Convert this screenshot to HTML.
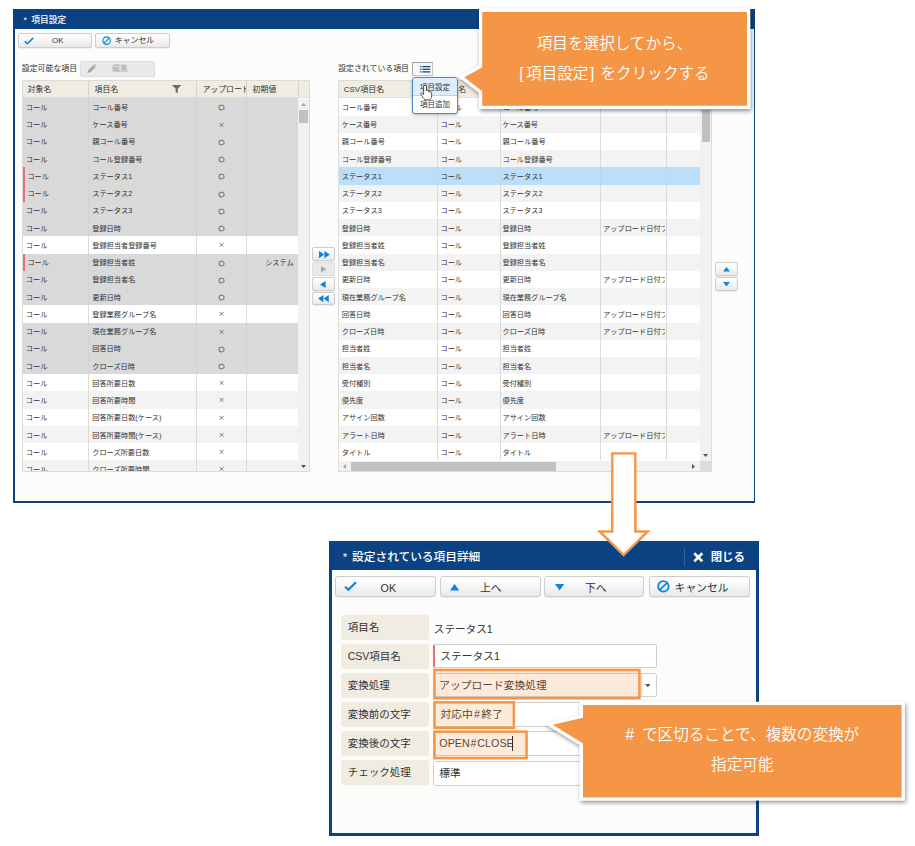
<!DOCTYPE html>
<html lang="ja">
<head>
<meta charset="utf-8">
<title>項目設定</title>
<style>
html,body{margin:0;padding:0;background:#fff;}
body{width:915px;height:846px;position:relative;overflow:hidden;
  font-family:"Liberation Sans","Noto Sans CJK JP",sans-serif;color:#333;
}
.abs,.abs *{position:absolute;}
div,span,i,b{position:absolute;box-sizing:border-box;white-space:nowrap;}
svg{position:absolute;overflow:visible;}
/* ---------- window 1 ---------- */
#w1{left:13px;top:9px;width:742px;height:494px;background:#0a4282;}
#w1 .body{left:2px;top:20px;width:738.6px;height:472px;background:#fcfcfa;}
#w1 .ttl{left:10.4px;top:5px;font-size:8.75px;word-spacing:2px;line-height:13px;font-weight:500;color:#fff;}
.btn{border:1px solid #cdcdcd;border-radius:2px;background:linear-gradient(#ffffff,#f4f4f4 55%,#e9e9e9);box-shadow:0 0.5px 0.5px rgba(0,0,0,.12);}
.btn.dis{background:#e9e9e9;border-color:#dcdcdc;box-shadow:none;}
.t8{font-size:7.9px;line-height:12px;}
/* tables */
.tbl{background:#fff;border:1px solid #dcdcdc;overflow:hidden;}
.hd{left:0;top:0;height:17.4px;background:#f0ece1;border-bottom:1px solid #e4e0d4;}
.hd span{top:3px;font-size:7.9px;line-height:12px;color:#333;}
.hd i{top:0;width:1px;height:17.4px;background:#fbfaf6;border-left:0.6px solid #d6d2c6;}
.rows{left:0;top:17.4px;}
.r{left:0;height:17.24px;font-size:7.2px;line-height:17.6px;color:#333;}
.r span{top:0.6px;}
#lt .r .c3{top:1px;}
#lt .r .c3.x{top:0px;}
.r.e{background:#fff;}
.r.o{background:#f3f3f3;}
.r.g{background:#d9d9d9;}
.r.s{background:#bbdefb;}
#lt .r{width:275.2px;}
#lt .c1{left:3.2px;}
#lt .c2{left:69.6px;}
#lt .c3{left:174px;width:49.7px;text-align:center;color:#444;font-size:6.5px;font-family:"IPAGothic","Noto Sans CJK JP",sans-serif;-webkit-text-stroke:0.18px #3a3a3a;color:#3a3a3a;}
#lt .c3.x{font-family:"Noto Sans CJK JP",sans-serif;font-size:6.6px;-webkit-text-stroke:0;color:#484848;}
#lt .c4{left:224.6px;width:46.5px;text-align:right;}
#lt .red{left:0;top:0;width:2px;height:17.24px;background:#e8707a;}
.vl{top:0;width:1px;background:#d0d0d0;opacity:.75;}
#rt .r{width:361px;}
#rt .d1{left:2.8px;}
#rt .d2{left:101.6px;}
#rt .d3{left:163.6px;}
#rt .d4{left:264.2px;width:61.6px;overflow:hidden;height:17px;}
/* ---------- window 2 ---------- */
#w2{left:329.1px;top:541.2px;width:429.9px;height:294.8px;background:#0a4282;}
#w2 .body{left:2.6px;top:28.9px;width:424.5px;height:263px;background:#fcfcfa;}
#w2 .ttl{left:13.6px;top:7.7px;font-size:11.7px;word-spacing:1.6px;line-height:16px;font-weight:500;color:#fff;}
.t10{font-size:10.8px;line-height:16px;}
.lab{left:341.1px;width:88.2px;height:24.8px;background:#f0ece1;border-radius:3px;font-size:10.5px;line-height:24.8px;padding-left:6.6px;color:#333;}
.inp{left:433.3px;height:24.6px;border:1px solid #cfcfcf;border-radius:2.5px;background:#fff;font-size:10.75px;line-height:23px;padding-left:5px;color:#333;}
.obox{border:2.3px solid #f59646;background:rgba(245,150,70,.2);}
/* callouts */
.co{color:#fff;font-size:15.6px;line-height:30.2px;text-align:center;font-weight:350;font-family:"Liberation Sans","Noto Sans CJK JP",sans-serif;font-feature-settings:normal;}
</style>
</head>
<body>

<!-- ================= WINDOW 1 ================= -->
<div id="w1">
  <span class="ttl">* 項目設定</span>
  <div class="body"></div>
</div>

<!-- toolbar buttons -->
<div class="btn" style="left:17.7px;top:33.4px;width:74.4px;height:14.2px;"></div>
<svg style="left:24.2px;top:36.6px" width="10" height="8" viewBox="0 0 10 8"><path d="M0.8 4.4 L3.4 6.8 L9.2 0.9" fill="none" stroke="#0d84dc" stroke-width="1.5"/></svg>
<span class="t8" style="left:52px;top:34.5px;">OK</span>
<div class="btn" style="left:95.1px;top:33.4px;width:75.2px;height:14.2px;"></div>
<svg style="left:101.8px;top:36px" width="9.2" height="9.2" viewBox="0 0 10 10"><circle cx="5" cy="5" r="4.1" fill="none" stroke="#0d84dc" stroke-width="1.2"/><path d="M2.2 7.8 L7.8 2.2" stroke="#0d84dc" stroke-width="1.2"/></svg>
<span class="t8" style="left:114.8px;top:34.5px;">キャンセル</span>

<!-- left label + edit button -->
<span class="t8" style="left:21.8px;top:62.6px;">設定可能な項目</span>
<div class="btn dis" style="left:80.4px;top:61px;width:74.6px;height:16px;"></div>
<svg style="left:86.6px;top:64.2px" width="9.6" height="9.6" viewBox="0 0 10 10"><path d="M0.6 9.4 L1.3 6.6 L6.6 1.3 L8.7 3.4 L3.4 8.7 Z M7.2 0.8 L8 0 L10 2 L9.2 2.8 Z" fill="#a6a6a6"/></svg>
<span class="t8" style="left:112px;top:63px;color:#a8a8a8;">編集</span>

<!-- left table -->
<div id="lt" class="tbl" style="left:21.6px;top:80px;width:288px;height:392px;">
  <div class="hd" style="width:288px;">
    <span style="left:5px;">対象名</span>
    <span style="left:72px;">項目名</span>
    <span style="left:179.8px;width:44px;overflow:hidden;">アップロード</span>
    <span style="left:230px;">初期値</span>
    <i style="left:65.4px"></i><i style="left:173.8px"></i><i style="left:223.6px"></i><i style="left:275px"></i>
    <svg style="left:149.6px;top:3.8px" width="9.4" height="8.4" viewBox="0 0 10 9"><path d="M0 0 H10 L6.1 4 V9 L3.9 7.6 V4 Z" fill="#6a6a6a"/></svg>
  </div>
  <div class="rows">
<div class="r g" style="top:0.00px"><span class="c1">コール</span><span class="c2">コール番号</span><span class="c3">○</span><span class="c4"></span></div>
<div class="r g" style="top:17.24px"><span class="c1">コール</span><span class="c2">ケース番号</span><span class="c3 x">×</span><span class="c4"></span></div>
<div class="r g" style="top:34.48px"><span class="c1">コール</span><span class="c2">親コール番号</span><span class="c3">○</span><span class="c4"></span></div>
<div class="r g" style="top:51.72px"><span class="c1">コール</span><span class="c2">コール登録番号</span><span class="c3">○</span><span class="c4"></span></div>
<div class="r g" style="top:68.96px"><i class="red"></i><span class="c1" style="left:4.8px">コール</span><span class="c2">ステータス1</span><span class="c3">○</span><span class="c4"></span></div>
<div class="r g" style="top:86.20px"><i class="red"></i><span class="c1" style="left:4.8px">コール</span><span class="c2">ステータス2</span><span class="c3">○</span><span class="c4"></span></div>
<div class="r g" style="top:103.44px"><span class="c1">コール</span><span class="c2">ステータス3</span><span class="c3">○</span><span class="c4"></span></div>
<div class="r g" style="top:120.68px"><span class="c1">コール</span><span class="c2">登録日時</span><span class="c3">○</span><span class="c4"></span></div>
<div class="r e" style="top:137.92px"><span class="c1">コール</span><span class="c2">登録担当者登録番号</span><span class="c3 x">×</span><span class="c4"></span></div>
<div class="r g" style="top:155.16px"><i class="red"></i><span class="c1" style="left:4.8px">コール</span><span class="c2">登録担当者姓</span><span class="c3">○</span><span class="c4">システム</span></div>
<div class="r g" style="top:172.40px"><span class="c1">コール</span><span class="c2">登録担当者名</span><span class="c3">○</span><span class="c4"></span></div>
<div class="r g" style="top:189.64px"><span class="c1">コール</span><span class="c2">更新日時</span><span class="c3">○</span><span class="c4"></span></div>
<div class="r e" style="top:206.88px"><span class="c1">コール</span><span class="c2">登録業務グループ名</span><span class="c3 x">×</span><span class="c4"></span></div>
<div class="r g" style="top:224.12px"><span class="c1">コール</span><span class="c2">現在業務グループ名</span><span class="c3 x">×</span><span class="c4"></span></div>
<div class="r g" style="top:241.36px"><span class="c1">コール</span><span class="c2">回答日時</span><span class="c3">○</span><span class="c4"></span></div>
<div class="r g" style="top:258.60px"><span class="c1">コール</span><span class="c2">クローズ日時</span><span class="c3">○</span><span class="c4"></span></div>
<div class="r e" style="top:275.84px"><span class="c1">コール</span><span class="c2">回答所要日数</span><span class="c3 x">×</span><span class="c4"></span></div>
<div class="r o" style="top:293.08px"><span class="c1">コール</span><span class="c2">回答所要時間</span><span class="c3 x">×</span><span class="c4"></span></div>
<div class="r e" style="top:310.32px"><span class="c1">コール</span><span class="c2">回答所要日数(ケース)</span><span class="c3 x">×</span><span class="c4"></span></div>
<div class="r o" style="top:327.56px"><span class="c1">コール</span><span class="c2">回答所要時間(ケース)</span><span class="c3 x">×</span><span class="c4"></span></div>
<div class="r e" style="top:344.80px"><span class="c1">コール</span><span class="c2">クローズ所要日数</span><span class="c3 x">×</span><span class="c4"></span></div>
<div class="r o" style="top:362.04px"><span class="c1">コール</span><span class="c2">クローズ所要時間</span><span class="c3 x">×</span><span class="c4"></span></div>
    <i class="vl" style="left:65.4px;height:380px;"></i>
    <i class="vl" style="left:173.8px;height:380px;"></i>
    <i class="vl" style="left:223.6px;height:380px;"></i>
  </div>
  <!-- v scrollbar -->
  <div style="left:275.2px;top:17.7px;width:12px;height:374px;background:#f1f1f1;"></div>
  <div style="left:276.6px;top:28.9px;width:8.6px;height:13.2px;background:#c1c1c1;"></div>
  <svg style="left:278.4px;top:21.8px" width="5" height="3" viewBox="0 0 5 3"><path d="M0 3 L2.5 0 L5 3 Z" fill="#a3a3a3"/></svg>
  <svg style="left:278.4px;top:383.6px" width="5" height="3" viewBox="0 0 5 3"><path d="M0 0 L2.5 3 L5 0 Z" fill="#505050"/></svg>
</div>

<!-- middle move buttons -->
<div class="btn" style="left:312.3px;top:247px;width:22.8px;height:14.4px;"></div>
<div class="btn dis" style="left:312.3px;top:262.4px;width:22.8px;height:13.8px;"></div>
<div class="btn" style="left:312.3px;top:277px;width:22.8px;height:13.6px;"></div>
<div class="btn" style="left:312.3px;top:291.6px;width:22.8px;height:13.8px;"></div>
<svg style="left:318.8px;top:251px" width="11" height="7.2" viewBox="0 0 11 7.2"><path d="M0 0 L5.2 3.6 L0 7.2 Z M5.4 0 L10.8 3.6 L5.4 7.2 Z" fill="#0d84dc"/></svg>
<svg style="left:320.8px;top:266.2px" width="5.4" height="6.6" viewBox="0 0 5.4 6.6"><path d="M0 0 L5.4 3.3 L0 6.6 Z" fill="#a9a9a9"/></svg>
<svg style="left:320.4px;top:280.8px" width="5.6" height="7" viewBox="0 0 5.6 7"><path d="M5.6 0 L0 3.5 L5.6 7 Z" fill="#0d84dc"/></svg>
<svg style="left:317.8px;top:295px" width="11" height="7.2" viewBox="0 0 11 7.2"><path d="M5.4 0 L0 3.6 L5.4 7.2 Z M10.8 0 L5.6 3.6 L10.8 7.2 Z" fill="#0d84dc"/></svg>

<!-- right label + menu button -->
<span class="t8" style="left:338.2px;top:62.6px;">設定されている項目</span>
<div style="left:412px;top:62px;width:20.8px;height:13.7px;border:1px solid #c6c6c6;border-top-color:#9c9c9c;border-left-color:#a8a8a8;background:#f7f7f7;"></div>
<svg style="left:419.8px;top:65.6px" width="10.6" height="6.6" viewBox="0 0 11 7"><g fill="#0a4282"><rect x="0" y="0" width="1.4" height="1.3"/><rect x="2.4" y="0" width="8.4" height="1.3"/><rect x="0" y="2.8" width="1.4" height="1.3"/><rect x="2.4" y="2.8" width="8.4" height="1.3"/><rect x="0" y="5.6" width="1.4" height="1.3"/><rect x="2.4" y="5.6" width="8.4" height="1.3"/></g></svg>

<!-- right table -->
<div id="rt" class="tbl" style="left:337.9px;top:80px;width:373.8px;height:392.3px;">
  <div class="hd" style="width:373px;">
    <span style="left:4.8px;font-size:8px;">CSV項目名</span>
    <span style="left:103.6px;">対象名</span>
    <span style="left:166px;">項目名</span>
    <span style="left:266px;">変換処理</span>
    <i style="left:98px"></i><i style="left:160.8px"></i><i style="left:261px"></i><i style="left:326.8px"></i><i style="left:361px"></i>
  </div>
  <div class="rows">
<div class="r e" style="top:0.00px"><span class="d1">コール番号</span><span class="d2">コール</span><span class="d3">コール番号</span><span class="d4"></span></div>
<div class="r o" style="top:17.24px"><span class="d1">ケース番号</span><span class="d2">コール</span><span class="d3">ケース番号</span><span class="d4"></span></div>
<div class="r e" style="top:34.48px"><span class="d1">親コール番号</span><span class="d2">コール</span><span class="d3">親コール番号</span><span class="d4"></span></div>
<div class="r o" style="top:51.72px"><span class="d1">コール登録番号</span><span class="d2">コール</span><span class="d3">コール登録番号</span><span class="d4"></span></div>
<div class="r s" style="top:68.96px"><span class="d1">ステータス1</span><span class="d2">コール</span><span class="d3">ステータス1</span><span class="d4"></span></div>
<div class="r o" style="top:86.20px"><span class="d1">ステータス2</span><span class="d2">コール</span><span class="d3">ステータス2</span><span class="d4"></span></div>
<div class="r e" style="top:103.44px"><span class="d1">ステータス3</span><span class="d2">コール</span><span class="d3">ステータス3</span><span class="d4"></span></div>
<div class="r o" style="top:120.68px"><span class="d1">登録日時</span><span class="d2">コール</span><span class="d3">登録日時</span><span class="d4">アップロード日付フォーマット</span></div>
<div class="r e" style="top:137.92px"><span class="d1">登録担当者姓</span><span class="d2">コール</span><span class="d3">登録担当者姓</span><span class="d4"></span></div>
<div class="r o" style="top:155.16px"><span class="d1">登録担当者名</span><span class="d2">コール</span><span class="d3">登録担当者名</span><span class="d4"></span></div>
<div class="r e" style="top:172.40px"><span class="d1">更新日時</span><span class="d2">コール</span><span class="d3">更新日時</span><span class="d4">アップロード日付フォーマット</span></div>
<div class="r o" style="top:189.64px"><span class="d1">現在業務グループ名</span><span class="d2">コール</span><span class="d3">現在業務グループ名</span><span class="d4"></span></div>
<div class="r e" style="top:206.88px"><span class="d1">回答日時</span><span class="d2">コール</span><span class="d3">回答日時</span><span class="d4">アップロード日付フォーマット</span></div>
<div class="r o" style="top:224.12px"><span class="d1">クローズ日時</span><span class="d2">コール</span><span class="d3">クローズ日時</span><span class="d4">アップロード日付フォーマット</span></div>
<div class="r e" style="top:241.36px"><span class="d1">担当者姓</span><span class="d2">コール</span><span class="d3">担当者姓</span><span class="d4"></span></div>
<div class="r o" style="top:258.60px"><span class="d1">担当者名</span><span class="d2">コール</span><span class="d3">担当者名</span><span class="d4"></span></div>
<div class="r e" style="top:275.84px"><span class="d1">受付種別</span><span class="d2">コール</span><span class="d3">受付種別</span><span class="d4"></span></div>
<div class="r o" style="top:293.08px"><span class="d1">優先度</span><span class="d2">コール</span><span class="d3">優先度</span><span class="d4"></span></div>
<div class="r e" style="top:310.32px"><span class="d1">アサイン回数</span><span class="d2">コール</span><span class="d3">アサイン回数</span><span class="d4"></span></div>
<div class="r o" style="top:327.56px"><span class="d1">アラート日時</span><span class="d2">コール</span><span class="d3">アラート日時</span><span class="d4">アップロード日付フォーマット</span></div>
<div class="r e" style="top:344.80px"><span class="d1">タイトル</span><span class="d2">コール</span><span class="d3">タイトル</span><span class="d4"></span></div>
    <i class="vl" style="left:98.1px;height:362px;"></i>
    <i class="vl" style="left:160.9px;height:362px;"></i>
    <i class="vl" style="left:261.1px;height:362px;"></i>
    <i class="vl" style="left:326.8px;height:362px;"></i>
  </div>
  <!-- v scrollbar -->
  <div style="left:361px;top:17.7px;width:11.7px;height:374px;background:#f1f1f1;"></div>
  <div style="left:362.8px;top:28.9px;width:8.4px;height:32.4px;background:#c1c1c1;"></div>
  <svg style="left:364.5px;top:373.2px" width="5" height="3" viewBox="0 0 5 3"><path d="M0 0 L2.5 3 L5 0 Z" fill="#505050"/></svg>
  <!-- h scrollbar -->
  <div style="left:0;top:379.8px;width:362px;height:12px;background:#f1f1f1;"></div>
  <div style="left:361px;top:379.8px;width:11.7px;height:12px;background:#dcdcdc;"></div>
  <div style="left:11.8px;top:381.4px;width:205.4px;height:8.2px;background:#c1c1c1;"></div>
  <svg style="left:4.6px;top:383px" width="3" height="5" viewBox="0 0 3 5"><path d="M3 0 L0 2.5 L3 5 Z" fill="#a3a3a3"/></svg>
  <svg style="left:353.2px;top:383px" width="3" height="5" viewBox="0 0 3 5"><path d="M0 0 L3 2.5 L0 5 Z" fill="#505050"/></svg>
</div>

<!-- up / down buttons -->
<div class="btn" style="left:715.2px;top:262.2px;width:23px;height:13.8px;"></div>
<div class="btn" style="left:715.2px;top:277.1px;width:23px;height:13.6px;"></div>
<svg style="left:722.8px;top:267.4px" width="7" height="4.6" viewBox="0 0 7 4.6"><path d="M0 4.6 L3.5 0 L7 4.6 Z" fill="#0d84dc"/></svg>
<svg style="left:722.8px;top:282px" width="7" height="4.6" viewBox="0 0 7 4.6"><path d="M0 0 L3.5 4.6 L7 0 Z" fill="#0d84dc"/></svg>

<!-- popup menu -->
<div style="left:412px;top:77.3px;width:45.9px;height:36.6px;background:#fff;border:1px solid #4a88c7;border-radius:3px;box-shadow:0 1px 3px rgba(0,0,0,.3);overflow:hidden;">
  <div style="left:0;top:0;width:44px;height:17.3px;background:#dcedfd;border-bottom:0.6px solid #b5d4f0;"></div>
  <span style="left:7px;top:3.6px;font-size:7.5px;line-height:12px;">項目設定</span>
  <span style="left:7px;top:20.4px;font-size:7.5px;line-height:12px;">項目追加</span>
</div>
<!-- hand cursor -->
<svg style="left:420px;top:84.6px" width="12.8" height="15.4" viewBox="0 0 16 20"><path d="M4.4 1.6 C4.4 0 8 0 8 1.6 V7.4 C8 6.2 10.4 6.4 10.4 7.6 V8.4 C10.4 7.4 12.6 7.6 12.6 8.6 V9.4 C12.6 8.6 14.8 8.8 14.8 9.8 V14 C14.8 17 13.2 19.2 10.4 19.2 H8 C6 19.2 4.8 18.2 3.8 16.6 L0.9 12 C0.1 10.6 2 9.6 3 10.8 L4.4 12.6 Z" fill="#fff" stroke="#2a2a2a" stroke-width="1" stroke-linejoin="round"/></svg>

<!-- ================= CALLOUT 1 ================= -->
<svg style="left:0;top:0" width="915" height="130" viewBox="0 0 915 130">
  <defs><filter id="sh" x="-5%" y="-10%" width="110%" height="125%"><feGaussianBlur in="SourceAlpha" stdDeviation="2"/><feOffset dx="0.8" dy="1.6"/><feComponentTransfer><feFuncA type="linear" slope="0.45"/></feComponentTransfer><feMerge><feMergeNode/><feMergeNode in="SourceGraphic"/></feMerge></filter></defs>
  <path d="M482.2 12 H747 V105.7 H482.2 V91.3 L464.2 77.3 L482.2 67.4 Z" fill="#f59646" stroke="#fff" stroke-width="6.4" stroke-linejoin="miter" filter="url(#sh)"/>
  <path d="M482.2 12 H747 V105.7 H482.2 V91.3 L464.2 77.3 L482.2 67.4 Z" fill="#f59646"/>
</svg>
<div class="co" style="left:482px;top:28.5px;width:265px;">項目を選択してから、<br><span style="position:static;letter-spacing:2.4px;">[</span>項目設定<span style="position:static;letter-spacing:0.9px;margin-left:1.6px;">] </span>をクリックする</div>

<!-- ================= ARROW ================= -->
<svg style="left:590px;top:445px" width="70" height="115" viewBox="590 445 70 115">
  <path d="M612.3 453.4 H635.3 V531.6 H647.4 L623.6 555 L600 531.6 H612.3 Z" fill="#fff" stroke="#f59646" stroke-width="2.4" stroke-linejoin="miter"/>
</svg>

<!-- ================= WINDOW 2 ================= -->
<div id="w2">
  <span class="ttl">* 設定されている項目詳細</span>
  <div class="body"></div>
  <i style="left:354.8px;top:7.2px;width:1.2px;height:18px;background:#35639a;"></i>
  <svg style="left:364.2px;top:11px" width="10.6" height="10.6" viewBox="0 0 10 10"><path d="M1.2 1.2 L8.8 8.8 M8.8 1.2 L1.2 8.8" stroke="#fff" stroke-width="2.5"/></svg>
  <span style="left:381.6px;top:7.8px;font-size:11.4px;line-height:16px;font-weight:700;color:#fff;">閉じる</span>
</div>
<!-- arrow redraw on top of window 2 title -->
<svg style="left:590px;top:520px" width="70" height="40" viewBox="590 520 70 40">
  <path d="M612.3 510 V531.6 H600 L623.6 555 L647.4 531.6 H635.3 V510" fill="#fff" stroke="#f59646" stroke-width="2.4" stroke-linejoin="miter"/>
</svg>

<!-- w2 toolbar -->
<div class="btn" style="left:335.1px;top:576.2px;width:100.6px;height:20.8px;border-radius:3px;"></div>
<svg style="left:344.4px;top:581.4px" width="13" height="10.4" viewBox="0 0 10 8"><path d="M0.8 4.4 L3.4 6.8 L9.2 0.9" fill="none" stroke="#0d84dc" stroke-width="1.7"/></svg>
<span class="t10" style="left:380.6px;top:579.6px;">OK</span>

<div class="btn" style="left:439.5px;top:576.2px;width:101.2px;height:20.8px;border-radius:3px;"></div>
<svg style="left:450.2px;top:583.6px" width="9.2" height="6.6" viewBox="0 0 7 5"><path d="M0 5 L3.5 0 L7 5 Z" fill="#0d84dc"/></svg>
<span class="t10" style="left:480px;top:579.6px;">上へ</span>

<div class="btn" style="left:544.4px;top:576.2px;width:99.8px;height:20.8px;border-radius:3px;"></div>
<svg style="left:555.2px;top:583.8px" width="9.2" height="6.6" viewBox="0 0 7 5"><path d="M0 0 L3.5 5 L7 0 Z" fill="#0d84dc"/></svg>
<span class="t10" style="left:585px;top:579.6px;">下へ</span>

<div class="btn" style="left:648.7px;top:576.2px;width:101px;height:20.8px;border-radius:3px;"></div>
<svg style="left:657.3px;top:580.2px" width="12.8" height="12.8" viewBox="0 0 10 10"><circle cx="5" cy="5" r="4.1" fill="none" stroke="#0d84dc" stroke-width="1.4"/><path d="M2.2 7.8 L7.8 2.2" stroke="#0d84dc" stroke-width="1.4"/></svg>
<span class="t10" style="left:674.6px;top:579.6px;">キャンセル</span>

<!-- form -->
<div class="lab" style="top:614.9px;">項目名</div>
<div class="lab" style="top:643.8px;">CSV項目名</div>
<div class="lab" style="top:672.9px;">変換処理</div>
<div class="lab" style="top:702.1px;">変換前の文字</div>
<div class="lab" style="top:731.2px;">変換後の文字</div>
<div class="lab" style="top:760.4px;">チェック処理</div>

<span class="t10" style="left:433.8px;top:621px;font-size:10.6px;">ステータス1</span>
<div class="inp" style="top:643.7px;width:224px;border-left:2px solid #e56b76;">ステータス1</div>
<div class="inp" style="top:672.6px;width:224px;">アップロード変換処理</div>
<i style="left:641px;top:673.6px;width:1px;height:22px;background:#dadada;"></i>
<svg style="left:645.4px;top:683.6px" width="5.6" height="3.2" viewBox="0 0 5.6 3.2"><path d="M0 0 L2.8 3.2 L5.6 0 Z" fill="#555"/></svg>
<div class="inp" style="top:702px;width:224px;padding-left:6.2px;">対応中<span style="position:static;margin:0 1.3px;">#</span>終了</div>
<div class="inp" style="top:731.2px;width:224px;">OPEN<span style="position:static;margin:0 0.8px;">#</span>CLOSE</div>
<i style="left:512.2px;top:736.4px;width:0.9px;height:14.6px;background:#111;"></i>
<div class="inp" style="top:761px;width:224px;">標準</div>

<!-- orange highlight boxes -->
<svg style="left:0;top:660px" width="915" height="110" viewBox="0 660 915 110"><g fill="rgba(245,150,70,.2)" stroke="#f59646" stroke-width="2.5">
<rect x="434.45" y="669.95" width="205.00" height="28.30"/>
<rect x="434.45" y="702.35" width="79.40" height="25.50"/>
<rect x="434.45" y="731.65" width="92.10" height="26.50"/>
</g></svg>

<!-- ================= CALLOUT 2 ================= -->
<svg style="left:0;top:690px" width="915" height="130" viewBox="0 690 915 130">
  <path d="M583 705 H901.6 V797.4 H583 V743.4 L552.8 724.8 L583 717.8 Z" fill="#f59646" stroke="#fff" stroke-width="6.4" stroke-linejoin="miter" filter="url(#sh)"/>
  <path d="M583 705 H901.6 V797.4 H583 V743.4 L552.8 724.8 L583 717.8 Z" fill="#f59646"/>
</svg>
<div class="co" style="left:583px;top:719.8px;width:318.6px;"><span style="position:static;letter-spacing:1.8px;"># </span>で区切ることで、複数の変換が<br>指定可能</div>

</body>
</html>
